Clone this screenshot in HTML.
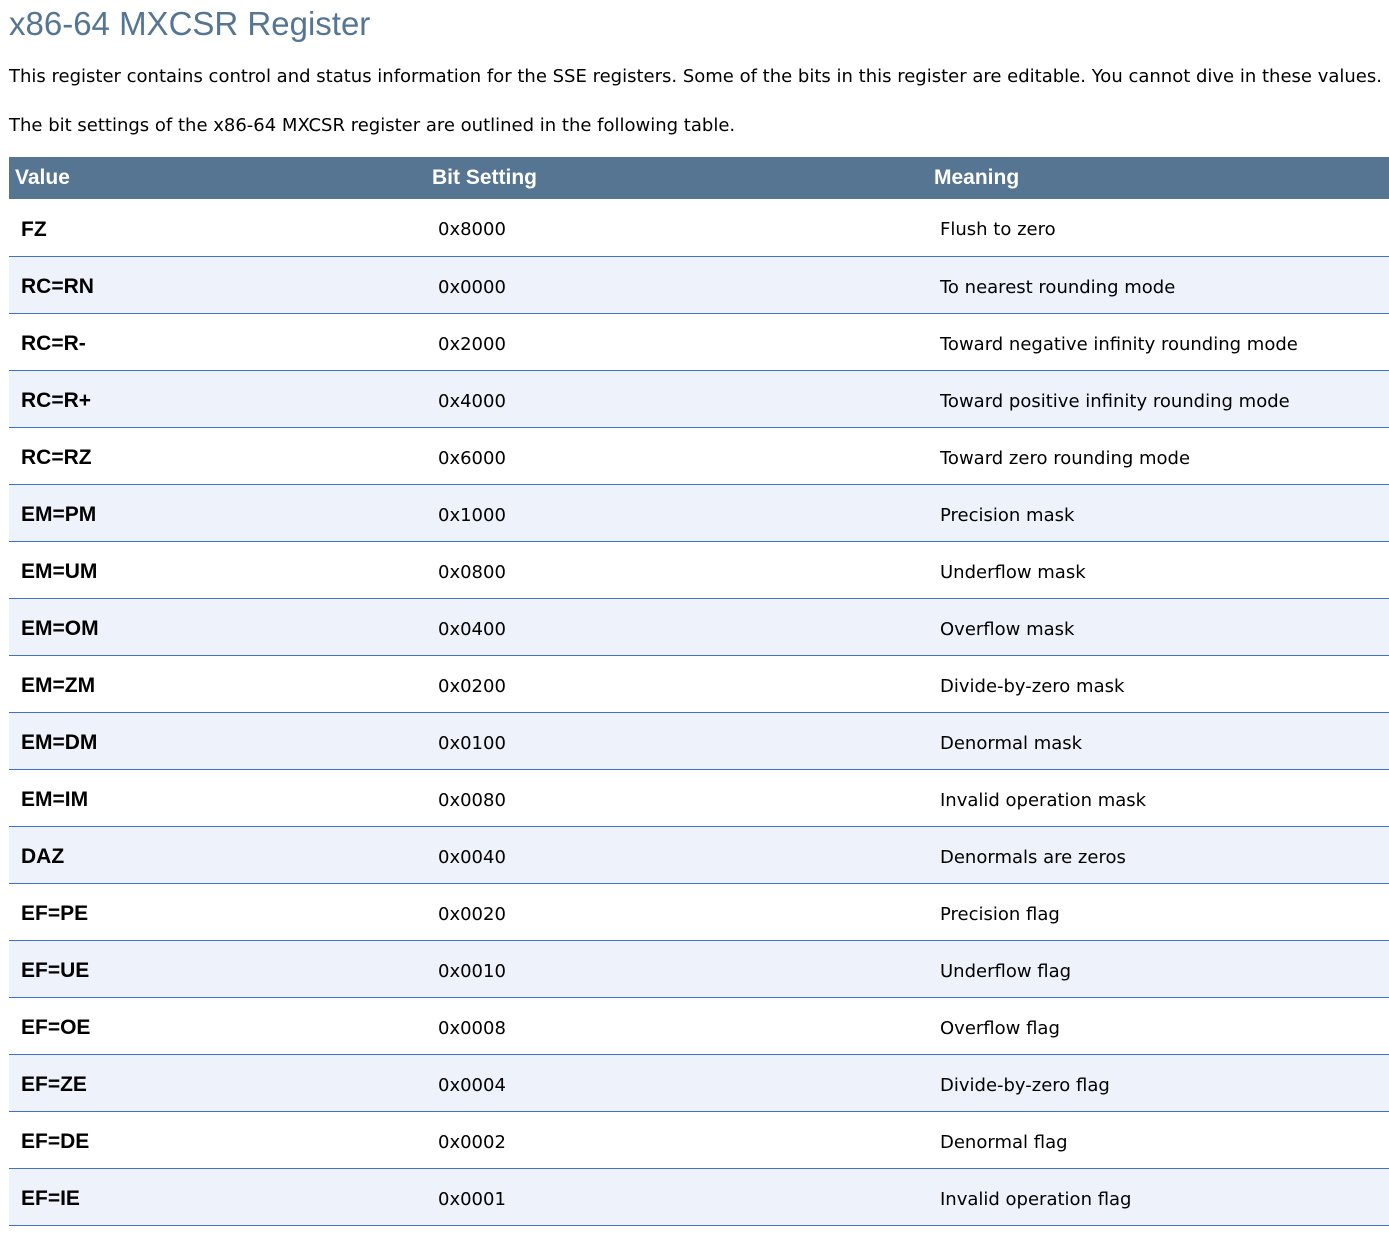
<!DOCTYPE html>
<html><head><meta charset="utf-8"><style>
body{margin:0;background:#fff;font-family:"DejaVu Sans",sans-serif;color:#000;width:1389px;height:1233px;overflow:hidden}
h1{position:absolute;left:9px;top:3px;margin:0;font-weight:normal;font-size:33px;color:#557592;line-height:42px;font-family:"Liberation Sans",sans-serif}
p{position:absolute;left:9px;margin:0;font-size:18px;line-height:24px;white-space:nowrap}
table{position:absolute;left:9px;top:157px;width:1380px;border-collapse:collapse;font-size:18px}
th{background:#557592;color:#fff;text-align:left;font-size:21px;height:42px;padding:0 0 0 6px;font-weight:bold;font-family:"Liberation Sans",sans-serif}
td{height:57px;border-bottom:1px solid #3f6fd8;padding:5px 0 0 12px;box-sizing:border-box}
tr:nth-child(odd) td{background:#eef2fa}
td:first-child{font-weight:bold;font-size:21px;font-family:"Liberation Sans",sans-serif}
</style></head><body>
<h1>x86-64 MXCSR Register</h1>
<p style="top:65px">This register contains control and status information for the SSE registers. Some of the bits in this register are editable. You cannot dive in these values.</p>
<p style="top:114px">The bit settings of the x86-64 MXCSR register are outlined in the following table.</p>
<table>
<colgroup><col style="width:417px"><col style="width:502px"><col></colgroup>
<tr><th>Value</th><th>Bit Setting</th><th>Meaning</th></tr>
<tr><td>FZ</td><td>0x8000</td><td>Flush to zero</td></tr>
<tr><td>RC=RN</td><td>0x0000</td><td>To nearest rounding mode</td></tr>
<tr><td>RC=R-</td><td>0x2000</td><td>Toward negative infinity rounding mode</td></tr>
<tr><td>RC=R+</td><td>0x4000</td><td>Toward positive infinity rounding mode</td></tr>
<tr><td>RC=RZ</td><td>0x6000</td><td>Toward zero rounding mode</td></tr>
<tr><td>EM=PM</td><td>0x1000</td><td>Precision mask</td></tr>
<tr><td>EM=UM</td><td>0x0800</td><td>Underflow mask</td></tr>
<tr><td>EM=OM</td><td>0x0400</td><td>Overflow mask</td></tr>
<tr><td>EM=ZM</td><td>0x0200</td><td>Divide-by-zero mask</td></tr>
<tr><td>EM=DM</td><td>0x0100</td><td>Denormal mask</td></tr>
<tr><td>EM=IM</td><td>0x0080</td><td>Invalid operation mask</td></tr>
<tr><td>DAZ</td><td>0x0040</td><td>Denormals are zeros</td></tr>
<tr><td>EF=PE</td><td>0x0020</td><td>Precision flag</td></tr>
<tr><td>EF=UE</td><td>0x0010</td><td>Underflow flag</td></tr>
<tr><td>EF=OE</td><td>0x0008</td><td>Overflow flag</td></tr>
<tr><td>EF=ZE</td><td>0x0004</td><td>Divide-by-zero flag</td></tr>
<tr><td>EF=DE</td><td>0x0002</td><td>Denormal flag</td></tr>
<tr><td>EF=IE</td><td>0x0001</td><td>Invalid operation flag</td></tr>
</table>
</body></html>
